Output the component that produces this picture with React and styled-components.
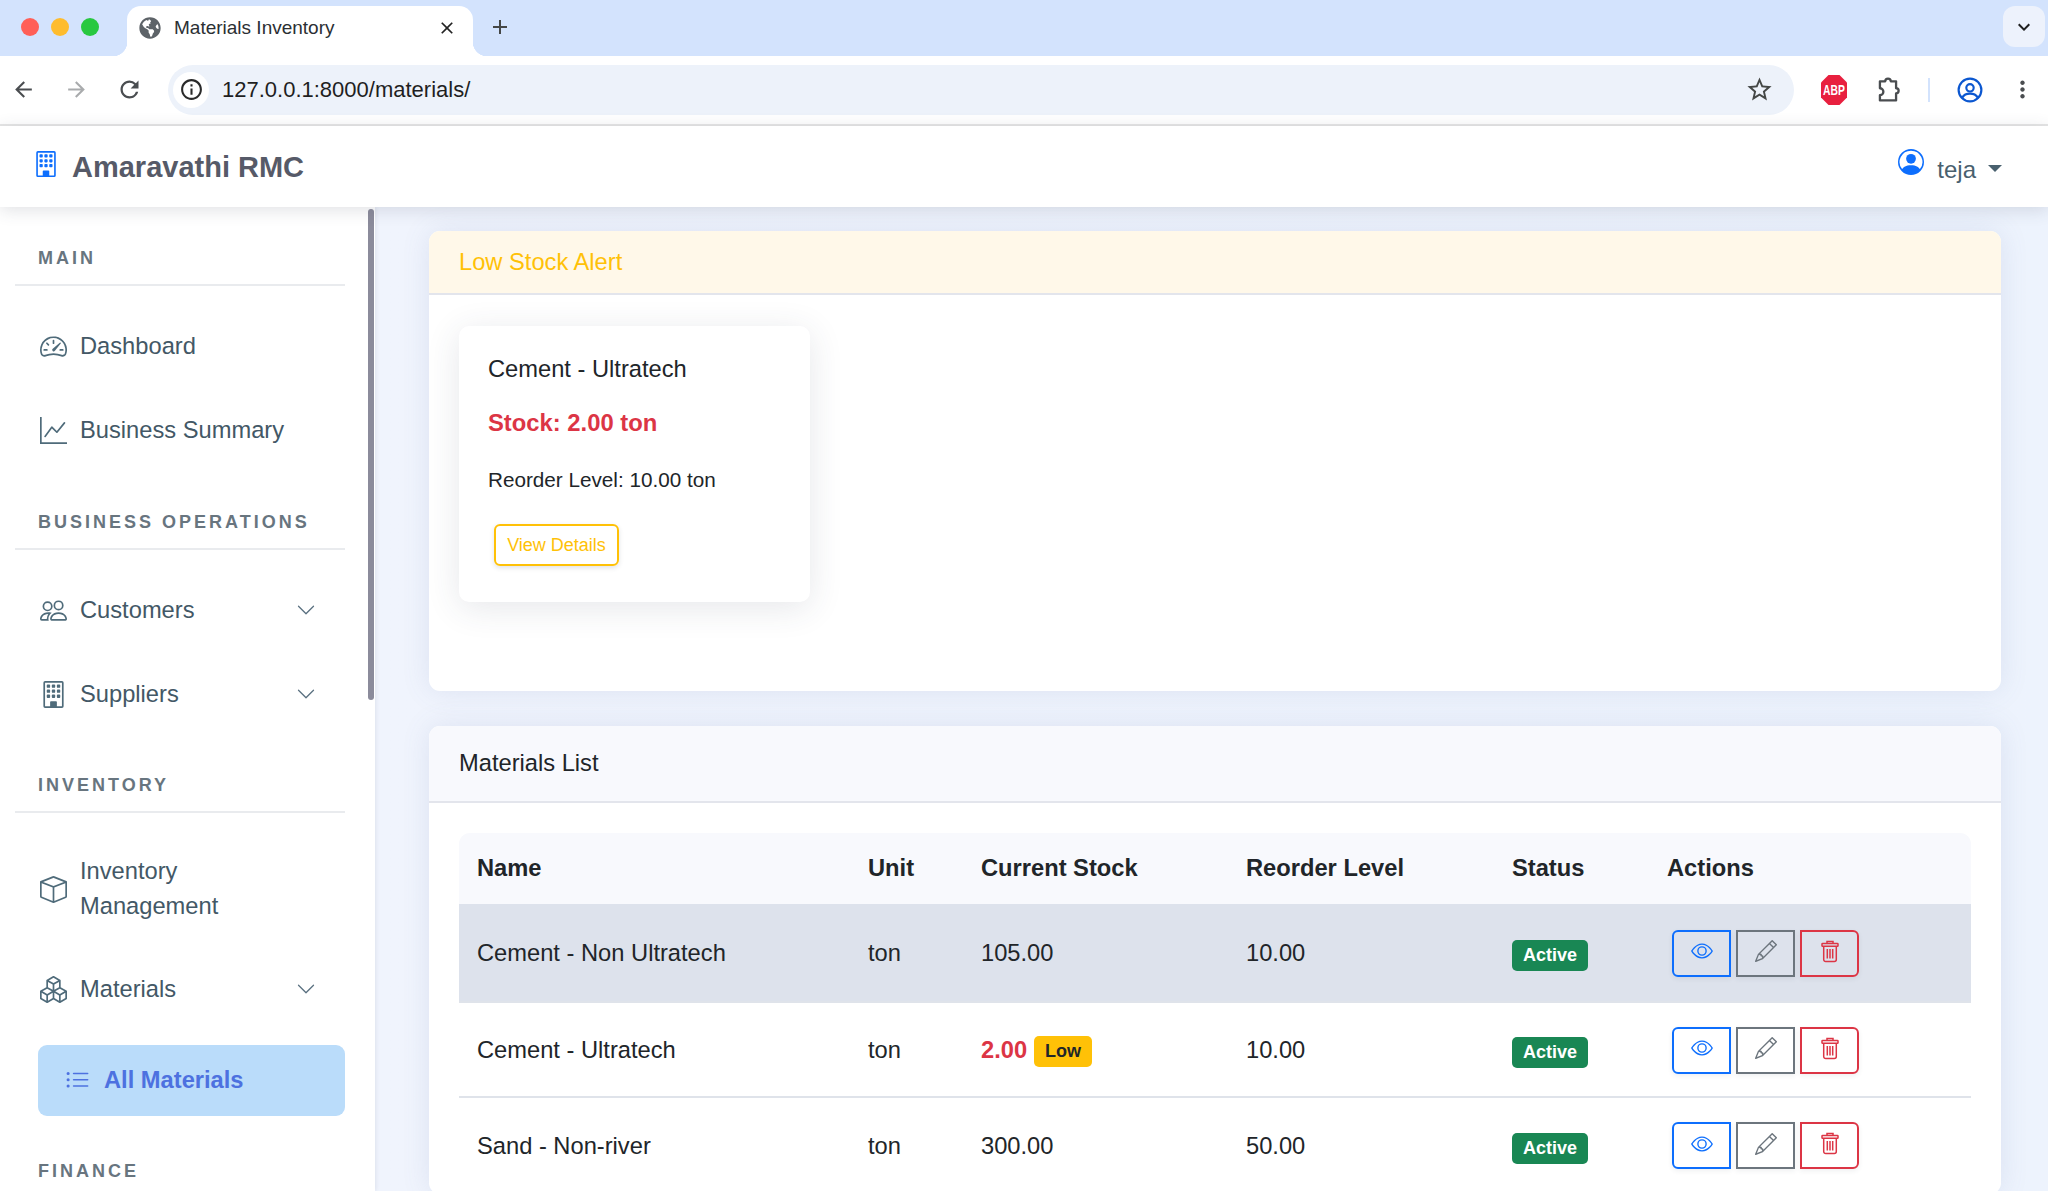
import React from "react";
import styled, { createGlobalStyle } from "styled-components";
import {
  BsBox, BsBoxes, BsBuilding, BsChevronDown, BsEye, BsGraphUp, BsListUl,
  BsPencil, BsPeople, BsPersonCircle, BsSpeedometer2,
} from "react-icons/bs";
import { FaGlobeAmericas } from "react-icons/fa";
import {
  MdArrowBack, MdArrowForward, MdClose, MdInfoOutline, MdKeyboardArrowDown, MdAdd,
  MdMoreVert, MdRefresh, MdStarBorder,
} from "react-icons/md";

const GlobalStyle = createGlobalStyle`
  html, body { margin: 0; padding: 0; height: 100%; overflow: hidden; }
  body { font-family: "Liberation Sans", Arial, sans-serif; color: #212529; background: #f0f4fc; }
  * { box-sizing: border-box; }
`;

const Page = styled.div`
  height: 100vh;
  display: flex;
  flex-direction: column;
  overflow: hidden;
`;

/* browser chrome */
const TabStrip = styled.div`
  height: 56px;
  flex: none;
  background: #d3e3fd;
  display: flex;
  align-items: flex-end;
  padding-left: 21px;
`;
const Light = styled.span`
  width: 18px;
  height: 18px;
  border-radius: 50%;
  background: ${(p) => p.$color};
  margin-right: 12px;
  align-self: flex-start;
  margin-top: 18px;
`;
const Tab = styled.div`
  width: 346px;
  height: 50px;
  margin-left: 16px;
  background: #fff;
  border-radius: 14px 14px 0 0;
  display: flex;
  align-items: center;
  padding: 0 16px 7px 12px;
  font-size: 19px;
  color: #2b2f33;
  position: relative;
  svg:first-child { color: #5d6368; margin-right: 13px; }
  &::before, &::after {
    content: "";
    position: absolute;
    bottom: 0;
    width: 14px;
    height: 14px;
  }
  &::before { left: -14px; background: radial-gradient(circle at 0 0, #d3e3fd 14px, #fff 14.5px); }
  &::after { right: -14px; background: radial-gradient(circle at 100% 0, #d3e3fd 14px, #fff 14.5px); }
`;
const TabTitle = styled.span`
  flex: 1;
`;
const StripIcon = styled.span`
  display: flex;
  color: #444746;
  margin: 0 0 17px 15px;
`;
const TabList = styled.div`
  margin: 0 3px 9px auto;
  width: 42px;
  height: 41px;
  border-radius: 12px;
  background: #edf2fc;
  display: flex;
  align-items: center;
  justify-content: center;
  color: #1f1f1f;
`;
const Toolbar = styled.div`
  height: 70px;
  flex: none;
  background: #fff;
  border-bottom: 2px solid #e6e6e6;
  display: flex;
  align-items: center;
  padding: 0 12px 1px 9px;
`;
const NavIcon = styled.span`
  display: flex;
  width: 28px;
  justify-content: center;
  margin-right: 25px;
  color: ${(p) => (p.$dim ? "#a9abad" : "#4a4d50")};
`;
const Omnibox = styled.div`
  width: 1626px;
  height: 50px;
  flex: none;
  border-radius: 25px;
  background: #edf2fa;
  display: flex;
  align-items: center;
  padding: 0 20px 0 5px;
  font-size: 22px;
  color: #1f1f1f;
`;
const InfoDot = styled.span`
  width: 36px;
  height: 36px;
  border-radius: 50%;
  background: #fff;
  display: flex;
  align-items: center;
  justify-content: center;
  margin-right: 13px;
  color: #2a2a2a;
`;
const Url = styled.span`
  flex: 1;
`;
const ExtIcons = styled.div`
  flex: 1;
  display: flex;
  align-items: center;
  justify-content: space-between;
  padding-left: 27px;
  color: #4a4d50;
`;
const ToolbarDivider = styled.span`
  width: 2px;
  height: 24px;
  background: #d3e3fd;
`;

/* app header */
const AppBar = styled.header`
  height: 81px;
  flex: none;
  background: #fff;
  box-shadow: 0 3px 16px rgba(60, 70, 90, 0.16);
  display: flex;
  align-items: center;
  justify-content: space-between;
  padding: 1px 46px 0 33px;
  position: relative;
  z-index: 2;
`;
const Brand = styled.div`
  display: flex;
  align-items: center;
  gap: 13px;
  font-size: 29px;
  font-weight: 700;
  color: #565a68;
  svg { color: #0d6efd; margin-top: -6px; }
`;
const UserMenu = styled.div`
  display: flex;
  align-items: center;
  font-size: 24px;
  color: #49606e;
  padding-top: 6px;
  svg { color: #0d6efd; margin: -16px 13px 0 0; }
`;
const Caret = styled.span`
  width: 0;
  height: 0;
  margin-left: 12px;
  margin-top: -4px;
  border-left: 7px solid transparent;
  border-right: 7px solid transparent;
  border-top: 7px solid #49606e;
`;

/* layout */
const Body = styled.div`
  flex: 1;
  display: flex;
  min-height: 0;
`;
const Sidebar = styled.aside`
  width: 375px;
  flex: none;
  background: #fff;
  padding-top: 39px;
  position: relative;
  box-shadow: 1px 0 4px rgba(60, 70, 90, 0.1);
  overflow: hidden;
`;
const Scrollbar = styled.span`
  position: absolute;
  top: 2px;
  right: 1px;
  width: 6px;
  height: 491px;
  border-radius: 3px;
  background: #8b8b9b;
`;
const SectionTitle = styled.div`
  height: 40px;
  margin: ${(p) => p.$top || 0}px 30px 0 15px;
  padding: 0 0 0 23px;
  font-size: 18px;
  line-height: 24px;
  font-weight: 700;
  letter-spacing: 3px;
  color: #68757f;
  border-bottom: ${(p) => (p.$plain ? "none" : "2px solid #e9ebee")};
`;
const NavGroup = styled.nav`
  margin-top: 18px;
`;
const NavItem = styled.div`
  height: ${(p) => p.$height || 84}px;
  display: flex;
  align-items: center;
  padding: 0 59px 0 40px;
  font-size: 23.7px;
  line-height: 35px;
  color: #435866;
`;
const NavIconBox = styled.span`
  display: flex;
  width: 40px;
  flex: none;
  svg { display: block; }
`;
const NavLabel = styled.span`
  flex: 1;
`;
const ActiveItem = styled.div`
  height: 71px;
  margin: 14px 30px 0 38px;
  border-radius: 9px;
  background: #badcfa;
  display: flex;
  align-items: center;
  padding-left: 27px;
  font-size: 23.7px;
  font-weight: 700;
  color: #4d71e0;
  gap: 14px;
`;

/* content */
const Main = styled.main`
  flex: 1;
  min-width: 0;
  padding: 24px 47px 0 54px;
  background: linear-gradient(90deg, #f0f4fd, #edf3fd);
  display: flex;
  flex-direction: column;
  gap: 35px;
`;
const Card = styled.section`
  flex: none;
  background: #fff;
  border-radius: 11px;
  box-shadow: 0 0 28px rgba(90, 110, 160, 0.13);
`;
const CardHeader = styled.div`
  height: ${(p) => p.$height}px;
  padding: 0 30px;
  display: flex;
  align-items: center;
  font-size: 23.7px;
  border-radius: 11px 11px 0 0;
  border-bottom: 2px solid #e3e5ec;
  background: ${(p) => p.$bg};
  color: ${(p) => p.$color};
`;
const CardBody = styled.div`
  height: 396px;
  padding: 31px 30px;
`;
const StockCard = styled.div`
  width: 351px;
  height: 276px;
  border-radius: 10px;
  background: #fff;
  padding: 28px 29px;
  box-shadow: 0 6px 34px rgba(50, 60, 80, 0.12);
`;
const StockName = styled.div`
  font-size: 23.7px;
  line-height: 30px;
`;
const StockValue = styled.div`
  margin-top: 24px;
  font-size: 23.8px;
  line-height: 30px;
  font-weight: 700;
  color: #dc3545;
`;
const StockReorder = styled.div`
  margin-top: 28px;
  font-size: 20.7px;
  line-height: 28px;
`;
const OutlineLink = styled.a`
  display: inline-flex;
  align-items: center;
  justify-content: center;
  width: 125px;
  height: 42px;
  margin: 30px 0 0 6px;
  border: 2px solid #ffc107;
  border-radius: 6px;
  font-size: 18px;
  color: #ffc107;
  box-shadow: 0 2px 5px rgba(50, 60, 80, 0.14);
`;
const TableWrap = styled.div`
  padding: 30px 30px 0;
`;
const Table = styled.table`
  width: 100%;
  table-layout: fixed;
  border-collapse: collapse;
  font-size: 23.7px;
`;
const HeadRow = styled.tr`
  height: 71px;
  background: #f8f9fd;
  th:first-child { border-top-left-radius: 11px; }
  th:last-child { border-top-right-radius: 11px; }
`;
const Th = styled.th`
  text-align: left;
  padding: 0 18px;
  font-weight: 700;
  color: #212529;
`;
const Row = styled.tr`
  height: ${(p) => p.$height}px;
  background: ${(p) => (p.$hover ? "#dde2ec" : "#fff")};
  border-bottom: 2px solid #dfe3ea;
`;
const Td = styled.td`
  padding: 2px 18px 0;
  vertical-align: middle;
`;
const Badge = styled.span`
  display: inline-block;
  padding: 0 11px;
  height: 31px;
  line-height: 31px;
  border-radius: 5px;
  font-size: 18px;
  font-weight: 700;
  background: ${(p) => (p.$low ? "#ffc107" : "#198754")};
  color: ${(p) => (p.$low ? "#212529" : "#fff")};
  vertical-align: middle;
  position: relative;
  top: ${(p) => (p.$low ? 1 : 2)}px;
`;
const LowValue = styled.span`
  font-weight: 700;
  color: #dc3545;
  margin-right: 7px;
  vertical-align: middle;
`;
const Actions = styled.div`
  display: flex;
  gap: 5px;
  padding-left: 5px;
  margin-top: -1px;
`;
const ActionBtn = styled.button`
  width: 59px;
  height: 47px;
  padding: 0 0 4px;
  background: transparent;
  border: 2px solid ${(p) => p.$color};
  color: ${(p) => p.$color};
  border-radius: ${(p) => p.$radius};
  display: flex;
  align-items: center;
  justify-content: center;
  box-shadow: 0 2px 5px rgba(50, 60, 80, 0.08);
`;

function ProfileIcon() {
  return (
    <svg width="26" height="26" viewBox="0 0 24 24" fill="none" stroke="#0b57d0" strokeWidth="2">
      <circle cx="12" cy="12" r="10.5" />
      <circle cx="12" cy="10" r="3.4" />
      <path d="M4.8 19c1.6-2.6 4-3.6 7.2-3.6s5.600 1 7.200 3.600" />
    </svg>
  );
}

function AbpIcon() {
  return (
    <svg width="26" height="30" viewBox="0 0 26 30">
      <path d="M7.500 0h11L26 7.500v15L18.500 30h-11L0 22.500v-15z" fill="#e8203f" />
      <text transform="translate(13 20) scale(.74 1)" textAnchor="middle" fontFamily="Liberation Sans" fontWeight="700" fontSize="14" fill="#fff">ABP</text>
    </svg>
  );
}

function ExtensionIcon() {
  return (
    <svg width="28" height="30" viewBox="0 0 24 26" fill="none" stroke="#4a4d50" strokeWidth="2" strokeLinejoin="round">
      <path d="M5 5.500h4.600a2.400 2.400 0 0 1 4.800 0H19v6a2.200 2.200 0 0 1 0 4.400V22H5v-4.500a3 3 0 0 0 0-6z" />
    </svg>
  );
}

function TrashIcon() {
  return (
    <svg width="18" height="23" viewBox="0 0 18 23" fill="none" stroke="currentColor" strokeWidth="1.5">
      <path d="M6 3.500V1.500h6v2" />
      <rect x="1" y="3.500" width="16" height="2.800" rx="0.600" />
      <path d="M2.700 6.300V19.500a2 2 0 0 0 2 2h8.600a2 2 0 0 0 2-2V6.300" />
      <path d="M6.300 9v9.500M9 9v9.500M11.700 9v9.500" />
    </svg>
  );
}

const navIcon = { size: 27, color: "#4f6b7a" };
const chevron = <BsChevronDown size={20} color="#5a7080" />;

const materials = [
  { name: "Cement - Non Ultratech", stock: "105.00", reorder: "10.00", height: 98, hover: true },
  { name: "Cement - Ultratech", stock: "2.00", reorder: "10.00", height: 95, low: true },
  { name: "Sand - Non-river", stock: "300.00", reorder: "50.00", height: 96 },
];

export default function App() {
  return (
    <Page>
      <GlobalStyle />
      <TabStrip>
        <Light $color="#ff5f57" />
        <Light $color="#febc2e" />
        <Light $color="#28c840" />
        <Tab>
          <FaGlobeAmericas size={22} />
          <TabTitle>Materials Inventory</TabTitle>
          <MdClose size={20} color="#222" />
        </Tab>
        <StripIcon><MdAdd size={24} /></StripIcon>
        <TabList><MdKeyboardArrowDown size={24} /></TabList>
      </TabStrip>
      <Toolbar>
        <NavIcon><MdArrowBack size={25} /></NavIcon>
        <NavIcon $dim><MdArrowForward size={25} /></NavIcon>
        <NavIcon><MdRefresh size={27} /></NavIcon>
        <Omnibox>
          <InfoDot><MdInfoOutline size={25} /></InfoDot>
          <Url>127.0.0.1:8000/materials/</Url>
          <MdStarBorder size={29} color="#444746" />
        </Omnibox>
        <ExtIcons>
          <AbpIcon />
          <ExtensionIcon />
          <ToolbarDivider />
          <ProfileIcon />
          <MdMoreVert size={27} />
        </ExtIcons>
      </Toolbar>
      <AppBar>
        <Brand><BsBuilding size={26} /> Amaravathi RMC</Brand>
        <UserMenu><BsPersonCircle size={26} />teja<Caret /></UserMenu>
      </AppBar>
      <Body>
        <Sidebar>
          <Scrollbar />
          <SectionTitle>MAIN</SectionTitle>
          <NavGroup>
            <NavItem><NavIconBox><BsSpeedometer2 {...navIcon} /></NavIconBox><NavLabel>Dashboard</NavLabel></NavItem>
            <NavItem><NavIconBox><BsGraphUp {...navIcon} /></NavIconBox><NavLabel>Business Summary</NavLabel></NavItem>
          </NavGroup>
          <SectionTitle $top={38}>BUSINESS OPERATIONS</SectionTitle>
          <NavGroup>
            <NavItem><NavIconBox><BsPeople {...navIcon} /></NavIconBox><NavLabel>Customers</NavLabel>{chevron}</NavItem>
            <NavItem><NavIconBox><BsBuilding {...navIcon} /></NavIconBox><NavLabel>Suppliers</NavLabel>{chevron}</NavItem>
          </NavGroup>
          <SectionTitle $top={37}>INVENTORY</SectionTitle>
          <NavGroup>
            <NavItem $height={116}><NavIconBox><BsBox {...navIcon} /></NavIconBox><NavLabel>Inventory<br />Management</NavLabel></NavItem>
            <NavItem><NavIconBox><BsBoxes {...navIcon} /></NavIconBox><NavLabel>Materials</NavLabel>{chevron}</NavItem>
          </NavGroup>
          <ActiveItem><BsListUl size={25} />All Materials</ActiveItem>
          <SectionTitle $top={43} $plain>FINANCE</SectionTitle>
        </Sidebar>
        <Main>
          <Card>
            <CardHeader $height={64} $bg="#fff8e9" $color="#ffc107">Low Stock Alert</CardHeader>
            <CardBody>
              <StockCard>
                <StockName>Cement - Ultratech</StockName>
                <StockValue>Stock: 2.00 ton</StockValue>
                <StockReorder>Reorder Level: 10.00 ton</StockReorder>
                <OutlineLink>View Details</OutlineLink>
              </StockCard>
            </CardBody>
          </Card>
          <Card>
            <CardHeader $height={77} $bg="#f8f9fd" $color="#212529">Materials List</CardHeader>
            <TableWrap>
              <Table>
                <colgroup>
                  <col style={{ width: 391 }} />
                  <col style={{ width: 113 }} />
                  <col style={{ width: 265 }} />
                  <col style={{ width: 266 }} />
                  <col style={{ width: 155 }} />
                  <col />
                </colgroup>
                <thead>
                  <HeadRow>
                    <Th>Name</Th>
                    <Th>Unit</Th>
                    <Th>Current Stock</Th>
                    <Th>Reorder Level</Th>
                    <Th>Status</Th>
                    <Th>Actions</Th>
                  </HeadRow>
                </thead>
                <tbody>
                  {materials.map((m) => (
                    <Row key={m.name} $height={m.height} $hover={m.hover}>
                      <Td>{m.name}</Td>
                      <Td>ton</Td>
                      <Td>
                        {m.low ? <><LowValue>{m.stock}</LowValue><Badge $low>Low</Badge></> : m.stock}
                      </Td>
                      <Td>{m.reorder}</Td>
                      <Td><Badge>Active</Badge></Td>
                      <Td>
                        <Actions>
                          <ActionBtn $color="#0d6efd" $radius="6px 0 0 6px"><BsEye size={22} /></ActionBtn>
                          <ActionBtn $color="#6c757d" $radius="0"><BsPencil size={22} /></ActionBtn>
                          <ActionBtn $color="#dc3545" $radius="0 6px 6px 0"><TrashIcon /></ActionBtn>
                        </Actions>
                      </Td>
                    </Row>
                  ))}
                </tbody>
              </Table>
            </TableWrap>
          </Card>
        </Main>
      </Body>
    </Page>
  );
}
